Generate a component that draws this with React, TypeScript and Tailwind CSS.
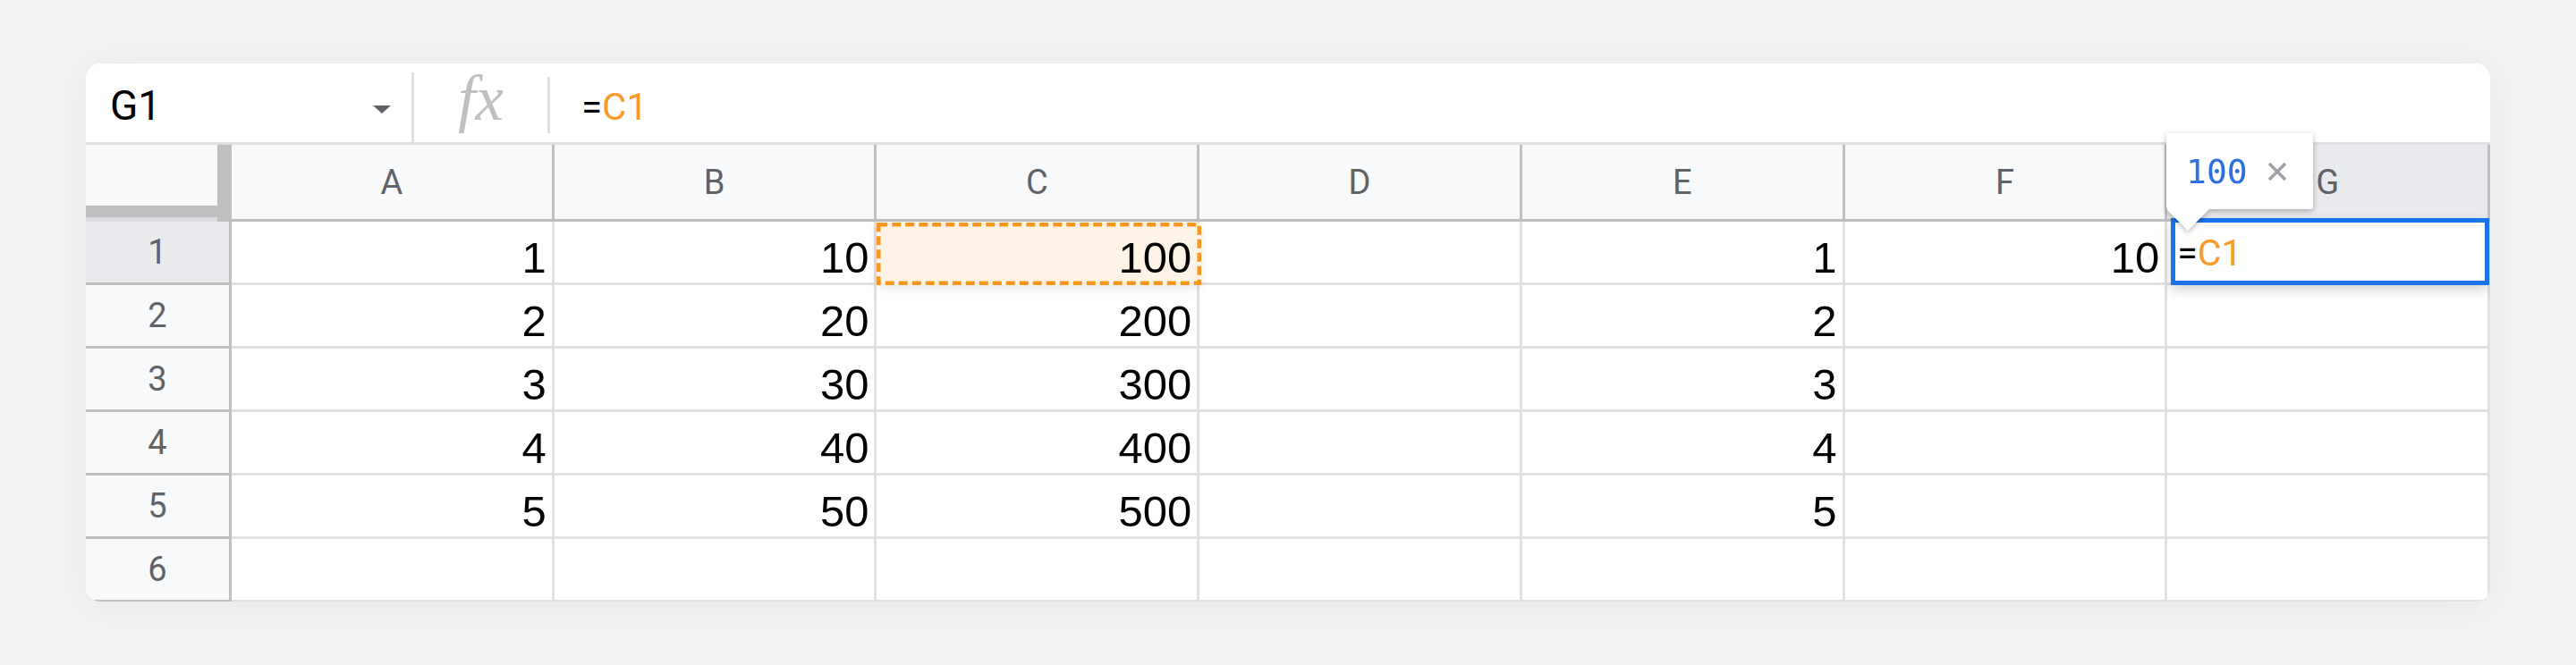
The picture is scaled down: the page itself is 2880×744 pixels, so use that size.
import React from "react";

const COLS = ["A", "B", "C", "D", "E", "F", "G"];
const DATA: string[][] = [
  ["1", "10", "100", "", "1", "10", ""],
  ["2", "20", "200", "", "2", "", ""],
  ["3", "30", "300", "", "3", "", ""],
  ["4", "40", "400", "", "4", "", ""],
  ["5", "50", "500", "", "5", "", ""],
  ["", "", "", "", "", "", ""],
];

function C1Marquee() {
  return (
    <div className="absolute left-0 -right-[5px] top-[1px] -bottom-[3px] bg-[#fdf3e6] shadow-[0_3px_10px_rgba(0,0,0,0.10)]">
      <svg className="absolute inset-0" width="363" height="70">
        <rect x="2.25" y="2.25" width="358.5" height="65.5" fill="none" stroke="#f8961e" strokeWidth="4.5" strokeDasharray="10 5" />
      </svg>
    </div>
  );
}

function G1Editor() {
  return (
    <div className="absolute left-[4px] -right-[2px] -top-[4px] -bottom-[3px] z-10 border-[5px] border-[#1a73e8] bg-white shadow-[0_5px_12px_rgba(0,0,0,0.18)] pl-[2px] pt-[14px] font-['Roboto',sans-serif] text-[41px] leading-none">
      <span className="text-black">=</span>
      <span className="text-[#f99a2b]">C1</span>
    </div>
  );
}

function Tooltip() {
  return (
    <div className="absolute left-[2326px] top-[78px] z-20 drop-shadow-[0_2px_3px_rgba(0,0,0,0.28)]">
      <div className="w-[164px] h-[85px] bg-white rounded-[3px] flex items-center pl-[22px]">
        <span className="font-['DejaVu_Sans_Mono',monospace] text-[38px] leading-none text-[#2f6fde]">100</span>
        <svg className="ml-[22px]" width="22" height="22" viewBox="0 0 22 22">
          <path d="M2 2 L20 20 M20 2 L2 20" stroke="#9aa0a6" strokeWidth="3.2" strokeLinecap="butt" />
        </svg>
      </div>
      <div className="w-[48px] h-[24px] bg-white [clip-path:polygon(0_0,100%_0,50%_100%)]" />
    </div>
  );
}

export default function App() {
  return (
    <div className="w-[2880px] h-[744px] bg-[#f3f3f3] flex items-center justify-center">
      <div className="relative w-[2688px] h-[602px] bg-white rounded-[16px] overflow-hidden shadow-[0_4px_50px_rgba(0,0,0,0.06)] flex flex-col">
        {/* formula bar */}
        <div className="flex h-[91px] shrink-0 border-b-[3px] border-[#e0e0e0]">
          <div className="w-[364px] shrink-0 flex items-start pl-[27px] pr-[23px]">
            <div className="mt-[24px] font-['Roboto',sans-serif] text-[46px] leading-none text-black">G1</div>
            <div className="ml-auto mt-[47px] w-0 h-0 border-x-[10px] border-x-transparent border-t-[9px] border-t-[#5f6368]" />
          </div>
          <div className="w-[3px] shrink-0 mt-[10px] bg-[#e0e0e0]" />
          <div className="w-[149px] shrink-0 flex justify-center items-start">
            <div className="mt-[4px] font-['Liberation_Serif',serif] italic text-[71px] leading-none text-[#c0c0c0]">fx</div>
          </div>
          <div className="w-[3px] shrink-0 mt-[15px] h-[63px] bg-[#e0e0e0]" />
          <div className="flex-1 flex items-start pl-[35px]">
            <div className="mt-[28px] font-['Roboto',sans-serif] text-[42px] leading-none">
              <span className="text-black">=</span>
              <span className="text-[#f99a2b]">C1</span>
            </div>
          </div>
        </div>

        {/* column header row */}
        <div className="flex h-[86px] shrink-0">
          <div className="w-[163px] shrink-0 flex flex-col">
            <div className="flex-1 bg-[#f8f9fa] border-r-[16px] border-b-[13px] border-[#bfbfbf]" />
            <div className="h-[5px] bg-[#dadce0] border-r-[16px] border-[#bfbfbf]" />
          </div>
          {COLS.map((c) => (
            <div
              key={c}
              className={`flex-1 min-w-0 flex items-center justify-center border-r-[3px] border-b-[3px] border-[#c0c0c0] font-['Roboto',sans-serif] text-[38px] leading-none text-[#5f6368] ${c === "G" ? "bg-[#e8eaed]" : "bg-[#f8f9fa]"}`}
            >
              {c}
            </div>
          ))}
        </div>

        {/* body rows */}
        {DATA.map((row, r) => (
          <div key={r} className="flex h-[71px] shrink-0">
            <div
              className={`w-[163px] shrink-0 flex items-center justify-center border-r-[3px] border-b-[3px] border-[#c0c0c0] font-['Roboto',sans-serif] text-[38px] leading-none text-[#5f6368] ${r === 0 ? "bg-[#e8eaed]" : "bg-[#f8f9fa]"}`}
            >
              {r + 1}
            </div>
            {row.map((v, c) => {
              const isC1 = r === 0 && c === 2;
              const isG1 = r === 0 && c === 6;
              return (
                <div
                  key={c}
                  className={`flex-1 min-w-0 flex items-end justify-end pr-[6px] pb-[3px] border-r-[3px] border-b-[3px] border-[#e1e1e1] ${isC1 || isG1 ? "relative" : ""}`}
                >
                  {isC1 && <C1Marquee />}
                  {isG1 && <G1Editor />}
                  {v && (
                    <span className="relative font-['Liberation_Sans',Arial,sans-serif] text-[49px] leading-none text-black">
                      {v}
                    </span>
                  )}
                </div>
              );
            })}
          </div>
        ))}

        <Tooltip />
      </div>
    </div>
  );
}
